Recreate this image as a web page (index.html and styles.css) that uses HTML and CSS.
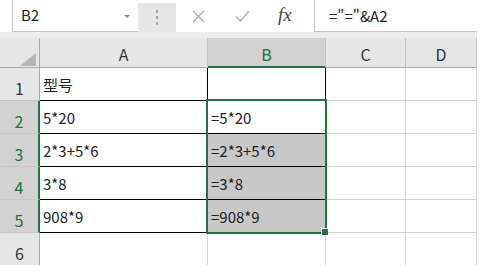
FILE: index.html
```html
<!DOCTYPE html>
<html lang="zh-CN">
<head>
    <meta charset="UTF-8">
    <title>Excel</title>
    <link rel="stylesheet" href="styles.css">
</head>
<body>

    <div class="sheet">
        <div class="topbar">
            <div class="namebox">
                <span>B2</span>
                <span class="caret"></span>
            </div>
            <div class="grip"><i></i><i></i><i></i></div>
            <div class="tools">
                <svg class="ico" width="13" height="13" viewBox="0 0 13 13">
                    <path d="M1 1 L12 12 M12 1 L1 12" stroke="#a8a8a8" stroke-width="1.3" fill="none"/>
                </svg>
                <svg class="ico" width="15" height="12" viewBox="0 0 15 12">
                    <path d="M1 6.5 L5.5 11 L14 1" stroke="#b4b4b4" stroke-width="1.6" fill="none"/>
                </svg>
                <span class="fx">fx</span>
            </div>
            <div class="formula">="="&amp;A2</div>
        </div>
        <div class="band"></div>

        <div class="grid">
            <!-- header row -->
            <div class="corner">
                <svg width="16" height="13" viewBox="0 0 16 13"><polygon points="16,0 16,13 0,13" fill="#b5b5b5"/></svg>
            </div>
            <div class="colhead">A</div>
            <div class="colhead sel">B</div>
            <div class="colhead">C</div>
            <div class="colhead">D</div>

            <!-- row 1 -->
            <div class="rowhead">1</div>
            <div class="cell ln">型号</div>
            <div class="cell ln"></div>
            <div class="cell"></div>
            <div class="cell"></div>

            <!-- row 2 -->
            <div class="rowhead sel">2</div>
            <div class="cell ln">5*20</div>
            <div class="cell ln">=5*20</div>
            <div class="cell"></div>
            <div class="cell"></div>

            <!-- row 3 -->
            <div class="rowhead sel">3</div>
            <div class="cell ln">2*3+5*6</div>
            <div class="cell ln hl">=2*3+5*6</div>
            <div class="cell"></div>
            <div class="cell"></div>

            <!-- row 4 -->
            <div class="rowhead sel">4</div>
            <div class="cell ln">3*8</div>
            <div class="cell ln hl">=3*8</div>
            <div class="cell"></div>
            <div class="cell"></div>

            <!-- row 5 -->
            <div class="rowhead sel">5</div>
            <div class="cell ln">908*9</div>
            <div class="cell ln hl">=908*9</div>
            <div class="cell"></div>
            <div class="cell"></div>

            <!-- row 6 -->
            <div class="rowhead last">6</div>
            <div class="cell last"></div>
            <div class="cell last"></div>
            <div class="cell last"></div>
            <div class="cell last"></div>

            <div class="selection"></div>
            <div class="handle"></div>
        </div>
    </div>

</body>
</html>
```

FILE: styles.css
```css
body {
    margin: 0;
    background: #fff;
    font-family: "Noto Sans CJK SC", "Noto Sans", sans-serif;
    font-size: 15px;
    color: #222;
}

.sheet {
    width: 477px;
}

/* formula bar */
.topbar {
    display: flex;
    height: 32px;
    background: #fff;
}

.namebox {
    width: 126px;
    margin-left: 12px;
    border-left: 1px solid #c6c6c6;
    border-bottom: 1px solid #c6c6c6;
    display: flex;
    align-items: center;
    justify-content: space-between;
    padding: 0 8px 1px 8px;
    box-sizing: border-box;
    line-height: 20px;
}

.caret {
    width: 0;
    height: 0;
    border-left: 3px solid transparent;
    border-right: 3px solid transparent;
    border-top: 3px solid #8a8a8a;
    margin-top: 2px;
}

.grip {
    width: 38px;
    margin-top: 3px;
    background: #e6e6e6;
    display: flex;
    flex-direction: column;
    align-items: center;
    justify-content: center;
    gap: 3px;
    padding-bottom: 1px;
}

.grip i {
    display: block;
    width: 2px;
    height: 3px;
    background: #a8a8a8;
}

.tools {
    width: 138px;
    display: flex;
    align-items: center;
    padding-left: 16px;
    box-sizing: border-box;
}

.tools .ico {
    margin-right: 30px;
}

.fx {
    font-family: "Liberation Serif", serif;
    font-style: italic;
    font-size: 19px;
    color: #444;
    margin-top: -2px;
    margin-left: -2px;
}

.formula {
    flex: 1;
    border-left: 1px solid #c6c6c6;
    border-bottom: 1px solid #c6c6c6;
    padding-left: 14px;
    display: flex;
    align-items: center;
    padding-bottom: 1px;
}

.band {
    height: 6px;
    background: #ececec;
}

/* grid */
.grid {
    position: relative;
    display: grid;
    grid-template-columns: 40px 168px 118px 80px 71px;
    grid-template-rows: 30px repeat(5, 33px) 32px;
}

.grid > div {
    box-sizing: border-box;
}

.corner {
    background: #e6e6e6;
    border-right: 1px solid #ababab;
    border-bottom: 1px solid #ababab;
    display: flex;
    align-items: flex-end;
    justify-content: flex-end;
    padding: 0 3px 1px 0;
}

.corner svg {
    display: block;
}

.colhead {
    background: #e6e6e6;
    border-right: 1px solid #c6c6c6;
    border-bottom: 1px solid #ababab;
    display: flex;
    align-items: center;
    justify-content: center;
    color: #333;
    font-size: 16px;
    padding-top: 3px;
}

.colhead.sel {
    background: #d2d2d2;
    color: #217346;
    border-bottom: 2px solid #217346;
    padding-top: 4px;
}

.rowhead {
    background: #e6e6e6;
    border-right: 1px solid #ababab;
    border-bottom: 1px solid #c6c6c6;
    display: flex;
    align-items: flex-end;
    justify-content: center;
    color: #333;
    font-size: 16px;
    line-height: 20px;
    padding-bottom: 2px;
}

.rowhead.sel {
    background: #d2d2d2;
    color: #217346;
    border-right: 2px solid #217346;
}

.rowhead.last,
.cell.last {
    border-bottom: none;
}

.cell {
    border-right: 1px solid #d4d4d4;
    border-bottom: 1px solid #d4d4d4;
    display: flex;
    align-items: flex-end;
    padding: 0 0 5px 3px;
    line-height: 20px;
    white-space: nowrap;
}

.cell.ln {
    border-right-color: #000;
    border-bottom-color: #000;
}

.cell.hl {
    background: #c8c8c8;
}

/* selected range B2:B5 */
.selection {
    position: absolute;
    left: 206px;
    top: 61px;
    width: 121px;
    height: 135px;
    border: 2px solid #217346;
    box-sizing: border-box;
}

.handle {
    position: absolute;
    left: 321px;
    top: 190px;
    width: 7px;
    height: 7px;
    background: #217346;
    border: 1px solid #fff;
    border-right: none;
    border-bottom: none;
    box-sizing: border-box;
}
```
